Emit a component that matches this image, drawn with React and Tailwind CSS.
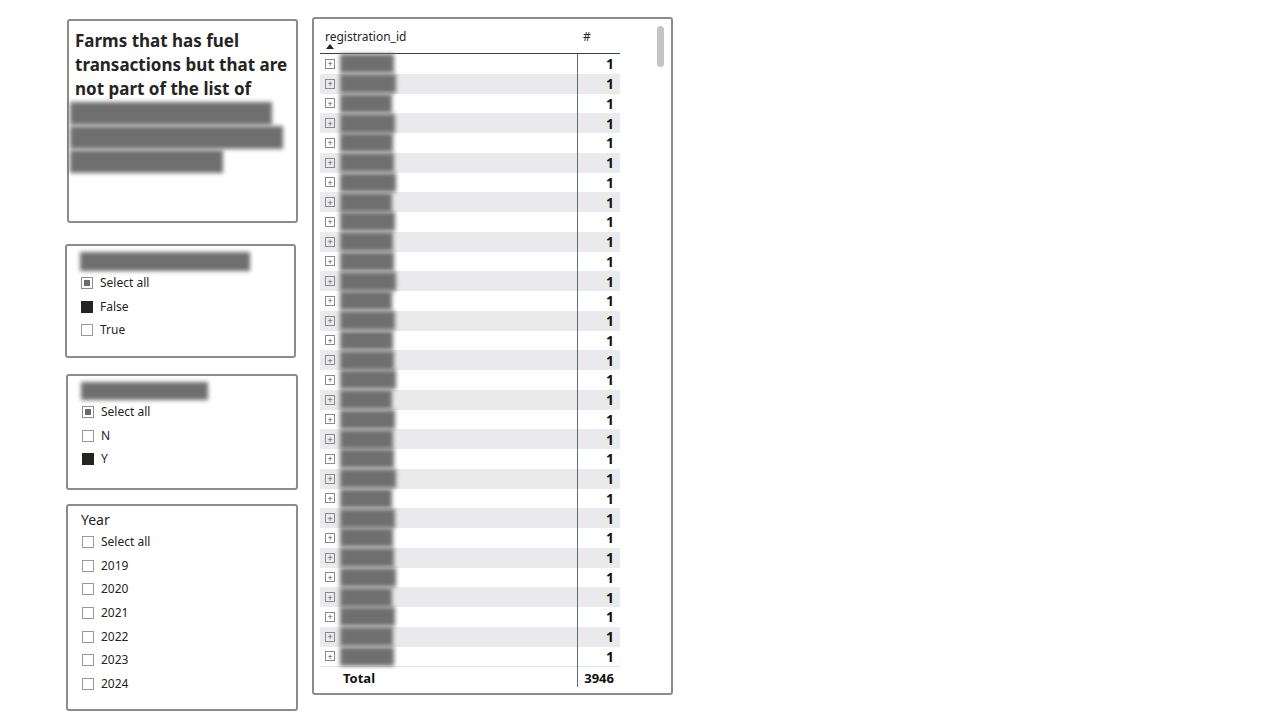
import React from 'react'

const font = { fontFamily: '"Noto Sans", "Open Sans", sans-serif' }

function Redacted({ className }) {
  return <div className={`bg-[#6f6f6f] blur-[2px] ${className}`} />
}

function Check({ state }) {
  if (state === 'on') return <span className="w-[12px] h-[12px] bg-[#252423] shrink-0" />
  if (state === 'partial')
    return (
      <span className="w-[12px] h-[12px] border border-[#8f8f8f] shrink-0 flex items-center justify-center">
        <span className="w-[6px] h-[6px] bg-[#6d6d6d]" />
      </span>
    )
  return <span className="w-[12px] h-[12px] border border-[#9a9a9a] shrink-0" />
}

function Slicer({ title, items, className }) {
  return (
    <div className={`border-2 border-[#8c8c8c] rounded-[3px] bg-white pl-[14px] pt-[6px] ${className}`}>
      {title}
      <div className="flex flex-col">
        {items.map(([label, state]) => (
          <div key={label} className="flex items-center gap-[7px] h-[23.7px] text-[12px] text-[#252423]">
            <Check state={state} />
            <span>{label}</span>
          </div>
        ))}
      </div>
    </div>
  )
}

function PlusBox() {
  return (
    <span className="w-[10px] h-[10px] border border-[#8a8a8a] flex items-center justify-center text-[9px] leading-none text-[#555] shrink-0">
      +
    </span>
  )
}

export default function App() {
  const rows = Array.from({ length: 31 }, (_, i) => i)
  const widths = ['w-[54px]', 'w-[56px]', 'w-[52px]', 'w-[55px]', 'w-[53px]']

  return (
    <div className="w-[1280px] h-[720px] bg-white relative overflow-hidden" style={font}>
      <div className="flex gap-[14px] pl-[65px] pt-[17px]">
        {/* left column */}
        <div className="flex flex-col w-[233px] pt-[2px]">
          <div className="border-2 border-[#8c8c8c] rounded-[3px] h-[204px] ml-[2px] w-[231px] pt-[8px] pl-[6px]">
            <div className="text-[17px] font-bold leading-[24px] text-[#252423]">
              Farms that has fuel transactions but that are not part of the list of
            </div>
            <div className="-ml-[5px] mt-[1px] flex flex-col gap-[1px]">
              <Redacted className="w-[202px] h-[23px]" />
              <Redacted className="w-[213px] h-[23px]" />
              <Redacted className="w-[153px] h-[23px]" />
            </div>
          </div>

          <Slicer
            className="mt-[21px] h-[114px] w-[231px]"
            title={<Redacted className="w-[170px] h-[19px] -ml-[1px]" />}
            items={[['Select all', 'partial'], ['False', 'on'], ['True', 'off']]}
          />

          <Slicer
            className="mt-[16px] h-[116px] w-[232px] ml-[1px]"
            title={<Redacted className="w-[127px] h-[18px] -ml-[1px]" />}
            items={[['Select all', 'partial'], ['N', 'off'], ['Y', 'on']]}
          />

          <Slicer
            className="mt-[14px] h-[207px] w-[232px] ml-[1px]"
            title={<div className="text-[14px] text-[#252423] h-[20px] leading-[20px] -mt-[2px] -ml-[1px]">Year</div>}
            items={[
              ['Select all', 'off'],
              ['2019', 'off'],
              ['2020', 'off'],
              ['2021', 'off'],
              ['2022', 'off'],
              ['2023', 'off'],
              ['2024', 'off'],
            ]}
          />
        </div>

        {/* table */}
        <div className="relative border-2 border-[#8c8c8c] rounded-[3px] w-[361px] h-[678px] pl-[6px] pt-[8px]">
          <div className="absolute right-[7px] top-[7px] w-[7px] h-[41px] rounded-full bg-[#c4c4c4]" />
          <div className="w-[300px]">
            <div className="flex h-[27px] border-b border-[#404040] text-[12px] text-[#252423] relative">
              <div className="w-[257px] pl-[5px] pt-[1px] relative">
                registration_id
                <span className="absolute left-[6px] top-[17px] w-0 h-0 border-l-[4px] border-r-[4px] border-b-[5px] border-l-transparent border-r-transparent border-b-[#252423]" />
              </div>
              <div className="pl-[6px] pt-[1px]">#</div>
            </div>
            <div className="flex flex-col relative">
              <div className="absolute left-[257px] top-0 bottom-[3px] w-px bg-[#5a6a82]" />
              {rows.map((i) => (
                <div
                  key={i}
                  className={`flex items-center h-[19.75px] ${i % 2 === 1 ? 'bg-[#eaeaec]' : 'bg-white'}`}
                >
                  <div className="w-[257px] flex items-center pl-[5px] h-full">
                    <PlusBox />
                    <Redacted className={`${widths[i % 5]} h-[19px] ml-[5px]`} />
                  </div>
                  <div className="flex-1 text-right pr-[6px] text-[14px] font-bold text-[#111]">1</div>
                </div>
              ))}
              <div className="flex items-center h-[24px] border-t border-[#e4e4e4] text-[13px] font-bold text-[#111]">
                <div className="w-[257px] pl-[23px]">Total</div>
                <div className="flex-1 text-right pr-[6px]">3946</div>
              </div>
            </div>
          </div>
        </div>
      </div>
    </div>
  )
}
